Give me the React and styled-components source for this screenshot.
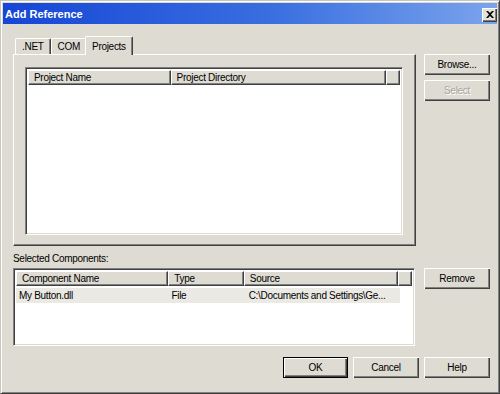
import React from "react";
import styled, { createGlobalStyle } from "styled-components";

const GlobalStyle = createGlobalStyle`
  html, body { margin: 0; padding: 0; background: #dedbd2; }
  body {
    font-family: "Liberation Sans", Arial, sans-serif;
    font-size: 10px;
    letter-spacing: -0.3px;
    color: #000;
  }
`;

const Window = styled.div`
  width: 500px;
  height: 394px;
  box-sizing: border-box;
  background: #dedbd2;
  border: 1px solid #c8c5bc;
  border-right-color: #404040;
  border-bottom-color: #404040;
  box-shadow: inset 1px 1px 0 #ffffff, inset -1px -1px 0 #808080;
  padding: 2px;
  display: flex;
  flex-direction: column;
`;

const TitleBar = styled.div`
  height: 21px;
  background: linear-gradient(to right, #1546d6 0%, #3a6fe0 55%, #7ba4ec 100%);
  display: flex;
  align-items: center;
  justify-content: space-between;
  padding: 0 0 0 2px;
  flex-shrink: 0;
`;

const Title = styled.span`
  color: #fff;
  font-weight: bold;
  font-size: 11px;
  letter-spacing: 0;
`;

const CloseButton = styled.div`
  width: 15px;
  height: 14px;
  margin-top: 2px;
  background: #e4e1d8;
  box-shadow: inset 1px 1px 0 #fff, inset -1px -1px 0 #404040, inset -2px -2px 0 #808080;
  display: flex;
  align-items: center;
  justify-content: center;
`;

const Body = styled.div`
  flex: 1;
  display: flex;
  flex-direction: column;
  padding: 11px 7px 0 10px;
`;

const Row = styled.div`
  display: flex;
  gap: ${p => p.gap || 8}px;
  align-items: flex-start;
`;

const TabArea = styled.div`
  width: 403px;
  display: flex;
  flex-direction: column;
`;

const TabStrip = styled.div`
  display: flex;
  align-items: flex-end;
  height: 19px;
  padding-left: 2px;
`;

const Tab = styled.div`
  height: ${p => (p.active ? 19 : 16)}px;
  padding: 0 ${p => (p.active ? 6 : 6)}px;
  box-sizing: border-box;
  display: flex;
  align-items: center;
  background: #dedbd2;
  border-top: 1px solid #fff;
  border-left: 1px solid #fff;
  border-right: 1px solid #404040;
  box-shadow: inset -1px 0 0 #808080;
  border-radius: 2px 2px 0 0;
  margin-left: ${p => (p.active ? -2 : 0)}px;
  margin-right: ${p => (p.active ? -2 : 0)}px;
  position: relative;
  z-index: ${p => (p.active ? 1 : 0)};
  margin-bottom: ${p => (p.active ? -1 : 0)}px;
`;

const TabPanel = styled.div`
  height: 192px;
  box-sizing: border-box;
  border-top: 1px solid #fff;
  border-left: 1px solid #fff;
  border-right: 1px solid #404040;
  border-bottom: 1px solid #404040;
  box-shadow: inset -1px -1px 0 #808080;
  padding: 12px 12px 11px 11px;
  display: flex;
`;

const ListBox = styled.div`
  width: ${p => p.w}px;
  height: ${p => p.h}px;
  box-sizing: border-box;
  background: #fff;
  border-top: 1px solid #808080;
  border-left: 1px solid #808080;
  border-right: 1px solid #fff;
  border-bottom: 1px solid #fff;
  box-shadow: inset 1px 1px 0 #404040, inset -1px -1px 0 #dedbd2;
  padding: 2px;
  display: flex;
  flex-direction: column;
`;

const HeaderRow = styled.div`
  display: flex;
  height: 15px;
  flex-shrink: 0;
`;

const HeaderCell = styled.div`
  width: ${p => p.w}px;
  box-sizing: border-box;
  background: #dedbd2;
  border-top: 1px solid #fff;
  border-left: 1px solid #fff;
  border-right: 1px solid #404040;
  border-bottom: 1px solid #404040;
  box-shadow: inset -1px -1px 0 #808080;
  padding-left: 5px;
  display: flex;
  align-items: center;
  white-space: nowrap;
  overflow: hidden;
`;

const DataRow = styled.div`
  display: flex;
  height: 15px;
  margin-top: 2px;
  width: ${p => p.w}px;
  background: #ebe9e3;
`;

const DataCell = styled.div`
  width: ${p => p.w}px;
  padding-left: 3px;
  display: flex;
  align-items: center;
  white-space: nowrap;
`;

const ButtonColumn = styled.div`
  display: flex;
  flex-direction: column;
  gap: 5px;
  padding-top: ${p => p.top || 0}px;
`;

const Button = styled.div`
  width: ${p => p.w || 66}px;
  height: 21px;
  box-sizing: border-box;
  display: flex;
  align-items: center;
  justify-content: center;
  background: #dedbd2;
  color: ${p => (p.disabled ? "#a8a59c" : "#000")};
  text-shadow: ${p => (p.disabled ? "1px 1px 0 #fff" : "none")};
  border: ${p => (p.default ? "1px solid #000" : "none")};
  box-shadow: inset 1px 1px 0 #fff, inset -1px -1px 0 #404040, inset -2px -2px 0 #808080;
`;

const Label = styled.div`
  margin: 8px 0 4px 0;
  height: 10px;
  line-height: 10px;
`;

const Footer = styled.div`
  display: flex;
  justify-content: flex-end;
  gap: 5px;
  margin-top: 11px;
`;

const App = () => (
  <>
    <GlobalStyle />
    <Window>
      <TitleBar>
        <Title>Add Reference</Title>
        <CloseButton>
          <svg width="8" height="7" viewBox="0 0 8 7">
            <path d="M0 0h2l2 2 2-2h2L5 3.5 8 7H6L4 5 2 7H0l3-3.5z" fill="#000" />
          </svg>
        </CloseButton>
      </TitleBar>
      <Body>
        <Row>
          <TabArea>
            <TabStrip>
              <Tab>.NET</Tab>
              <Tab>COM</Tab>
              <Tab active>Projects</Tab>
            </TabStrip>
            <TabPanel>
              <ListBox w={378} h={168}>
                <HeaderRow>
                  <HeaderCell w={143}>Project Name</HeaderCell>
                  <HeaderCell w={216}>Project Directory</HeaderCell>
                  <HeaderCell w={14} />
                </HeaderRow>
              </ListBox>
            </TabPanel>
          </TabArea>
          <ButtonColumn top={19}>
            <Button>Browse...</Button>
            <Button disabled>Select</Button>
          </ButtonColumn>
        </Row>
        <Label>Selected Components:</Label>
        <Row gap={9}>
          <ListBox w={402} h={78}>
            <HeaderRow>
              <HeaderCell w={153}>Component Name</HeaderCell>
              <HeaderCell w={76}>Type</HeaderCell>
              <HeaderCell w={155}>Source</HeaderCell>
              <HeaderCell w={14} />
            </HeaderRow>
            <DataRow w={384}>
              <DataCell w={153}>My Button.dll</DataCell>
              <DataCell w={76}>File</DataCell>
              <DataCell w={155}>C:\Documents and Settings\Ge...</DataCell>
            </DataRow>
          </ListBox>
          <ButtonColumn>
            <Button>Remove</Button>
          </ButtonColumn>
        </Row>
        <Footer>
          <Button default w={65}>OK</Button>
          <Button>Cancel</Button>
          <Button>Help</Button>
        </Footer>
      </Body>
    </Window>
  </>
);

export default App;
